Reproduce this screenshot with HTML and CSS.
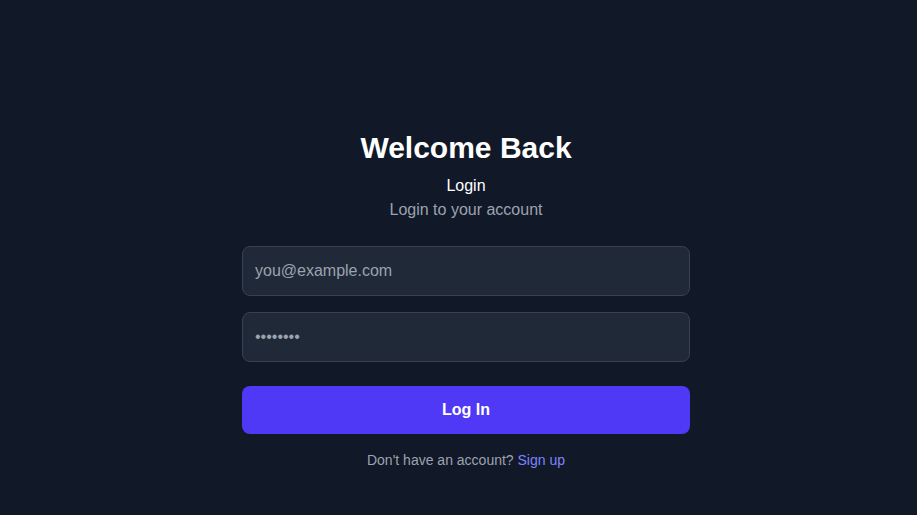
FILE: index.html
```html
<!DOCTYPE html>
<html lang="en">
<head>
<meta charset="utf-8">
<title>Login</title>
<link rel="stylesheet" href="styles.css">
</head>
<body>
<main class="page">
  <section class="card">
    <h1 class="title">Welcome Back</h1>
    <p class="label">Login</p>
    <p class="subtitle">Login to your account</p>
    <form class="form">
      <input class="field" type="email" placeholder="you@example.com">
      <input class="field" type="password" placeholder="••••••••">
      <button class="btn" type="button">Log In</button>
    </form>
    <p class="footer">Don't have an account? <a class="link" href="#">Sign up</a></p>
  </section>
</main>
</body>
</html>
```

FILE: styles.css
```css
* { box-sizing: border-box; }
html, body {
  margin: 0;
  padding: 0;
  background: #111827;
  height: 100%;
}
body {
  font-family: "Liberation Sans", Arial, sans-serif;
  color: #ffffff;
}
.page {
  min-height: 100%;
  display: flex;
  justify-content: center;
  padding-left: 15px;
  padding-top: 130px;
}
.card {
  width: 448px;
  display: flex;
  flex-direction: column;
  align-items: stretch;
  text-align: center;
}
.title {
  margin: 0;
  font-size: 30px;
  line-height: 36px;
  font-weight: 700;
}
.label {
  margin: 8px 0 0;
  font-size: 16px;
  line-height: 24px;
  color: #ffffff;
}
.subtitle {
  margin: 0;
  font-size: 16px;
  line-height: 24px;
  color: #9ca3af;
}
.form {
  margin-top: 24px;
  display: flex;
  flex-direction: column;
}
.field {
  height: 50px;
  padding: 12px;
  border: 1px solid #374151;
  border-radius: 8px;
  background: #1f2937;
  color: #fff;
  font-family: inherit;
  font-size: 16px;
  outline: none;
  margin-bottom: 16px;
}
.field::placeholder { color: #9ca3af; }
.field + .field { margin-bottom: 24px; }
.btn {
  height: 48px;
  border: 0;
  border-radius: 8px;
  background: #4f39f6;
  color: #fff;
  font-family: inherit;
  font-size: 16px;
  font-weight: 700;
}
.footer {
  margin: 16px 0 0;
  font-size: 14px;
  line-height: 20px;
  color: #9ca3af;
}
.link {
  color: #7c86ff;
  text-decoration: none;
}
```
